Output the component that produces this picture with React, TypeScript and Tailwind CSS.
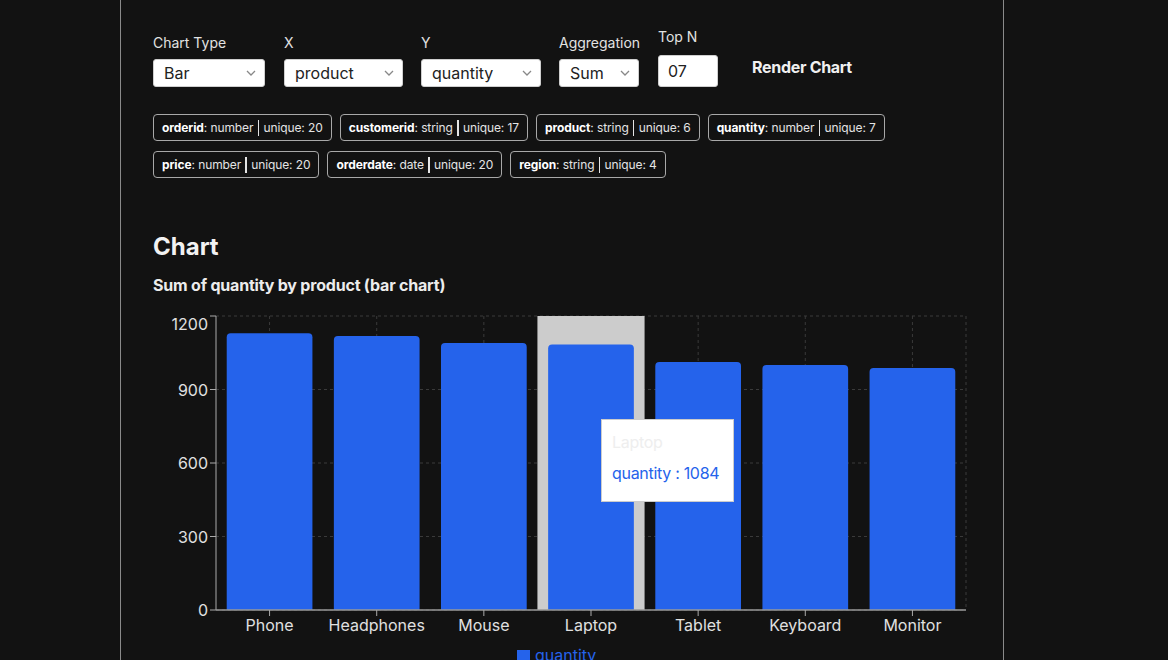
import React from "react";

const Chevron = () => (
  <svg className="pointer-events-none absolute right-[8px] top-1/2 -translate-y-1/2" width="10" height="6" viewBox="0 0 10 6">
    <path d="M1 1 L5 5 L9 1" fill="none" stroke="#888" strokeWidth="1.3" />
  </svg>
);

function Field({ label, value, width, className }: { label: string; value: string; width: string; className: string }) {
  return (
    <div className={`flex flex-col ${width} ${className}`}>
      <span className="mb-[6px] whitespace-nowrap text-sm leading-5 text-[#e2e2e2]">{label}</span>
      <div className={`relative h-[28px] ${width} rounded-[3px] border border-[#cfcfcf] bg-white`}>
        <span className="absolute left-[10px] top-1/2 -translate-y-1/2 text-base leading-5 text-[#222]">{value}</span>
        <Chevron />
      </div>
    </div>
  );
}

const pills = [
  ["orderid", "number", "20"],
  ["customerid", "string", "17"],
  ["product", "string", "6"],
  ["quantity", "number", "7"],
  ["price", "number", "20"],
  ["orderdate", "date", "20"],
  ["region", "string", "4"],
];

const data = [
  ["Phone", 1130],
  ["Headphones", 1118],
  ["Mouse", 1090],
  ["Laptop", 1084],
  ["Tablet", 1012],
  ["Keyboard", 1000],
  ["Monitor", 988],
] as const;

const FONT = "Inter, Roboto, 'Liberation Sans', sans-serif";

function Chart() {
  const ox = 63;
  const right = 813;
  const top = 16;
  const zero = 310;
  const band = (right - ox) / 7;
  const yScale = (v: number) => zero - (v / 1200) * (zero - top);
  const ticks = [0, 300, 600, 900, 1200];
  return (
    <div className="relative mt-[3px] h-[370px] w-[818px]">
      <svg width="818" height="370" className="block" style={{ fontFamily: FONT }}>
        {ticks.map((t) => (
          <line key={t} x1={ox} x2={right} y1={yScale(t)} y2={yScale(t)} stroke="#3a3a3a" strokeDasharray="3 3" />
        ))}
        {data.map((d, i) => (
          <line key={d[0]} x1={ox + band * (i + 0.5)} x2={ox + band * (i + 0.5)} y1={top} y2={zero} stroke="#3a3a3a" strokeDasharray="3 3" />
        ))}
        <line x1={right} x2={right} y1={top} y2={zero} stroke="#3a3a3a" strokeDasharray="3 3" />
        <rect x={ox + band * 3} y={top} width={band} height={zero - top} fill="#cccccc" />
        {data.map((d, i) => {
          const x = ox + band * i + band * 0.1;
          const w = band * 0.8;
          const y = yScale(d[1]);
          const r = 4;
          return (
            <path
              key={d[0]}
              d={`M${x},${zero} L${x},${y + r} Q${x},${y} ${x + r},${y} L${x + w - r},${y} Q${x + w},${y} ${x + w},${y + r} L${x + w},${zero} Z`}
              fill="#2563eb"
            />
          );
        })}
        <line x1={ox} x2={ox} y1={top} y2={zero} stroke="#aaaaaa" />
        <line x1={ox} x2={right} y1={zero} y2={zero} stroke="#999999" strokeWidth="1.5" />
        {ticks.map((t) => (
          <line key={t} x1={ox - 6} x2={ox} y1={yScale(t)} y2={yScale(t)} stroke="#aaaaaa" />
        ))}
        {ticks.map((t) => (
          <text
            key={t}
            x={ox - 8}
            y={t === 1200 ? yScale(t) + 8 : yScale(t)}
            textAnchor="end"
            dominantBaseline="central"
            fontSize="16"
            fill="#e0e0e0"
          >
            {t}
          </text>
        ))}
        {data.map((d, i) => (
          <g key={d[0]}>
            <line x1={ox + band * (i + 0.5)} x2={ox + band * (i + 0.5)} y1={zero} y2={zero + 6} stroke="#aaaaaa" />
            <text x={ox + band * (i + 0.5)} y={zero + 15} textAnchor="middle" dominantBaseline="central" fontSize="16" fill="#e0e0e0">
              {d[0]}
            </text>
          </g>
        ))}
        <rect x={364} y={350} width={13} height={13} fill="#2563eb" />
        <text x={382} y={355} dominantBaseline="central" fontSize="16" fill="#2563eb">
          quantity
        </text>
      </svg>
      <div className="absolute left-[448px] top-[119px] whitespace-nowrap border border-[#cccccc] bg-white pl-[10px] pr-[14px] pt-[10px] pb-[12px] text-base tracking-[-0.3px]">
        <div className="leading-6 text-[#eeeeee]">Laptop</div>
        <div className="pt-[7px] pb-[4px] leading-6 text-[#2563eb]">quantity : 1084</div>
      </div>
    </div>
  );
}

export default function App() {
  return (
    <div className="h-[660px] w-[1168px] overflow-hidden bg-[#121212]" style={{ fontFamily: FONT }}>
      <div className="ml-[120px] h-full w-[884px] border-x border-[#8a8a8a] px-8 pt-[27px]">
        <div className="flex items-end">
          <Field label="Chart Type" value="Bar" width="w-[112px]" className="" />
          <Field label="X" value="product" width="w-[119px]" className="ml-[19px]" />
          <Field label="Y" value="quantity" width="w-[120px]" className="ml-[18px]" />
          <Field label="Aggregation" value="Sum" width="w-[80px]" className="ml-[18px]" />
          <div className="ml-[19px] flex w-[60px] flex-col">
            <span className="mb-[8px] whitespace-nowrap text-sm leading-5 text-[#e2e2e2]">Top N</span>
            <div className="flex h-[32px] w-[60px] items-center rounded-[3px] border border-[#cfcfcf] bg-white pl-[9px] text-base text-[#222]">
              07
            </div>
          </div>
          <button className="ml-[18px] h-[41px] px-4 text-base font-bold leading-5 tracking-[-0.3px] text-[#f0f0f0]">Render Chart</button>
        </div>

        <div className="mt-[27px] flex flex-wrap gap-x-2 gap-y-[10px]">
          {pills.map(([n, t, u]) => (
            <div key={n} className="flex h-[27px] items-center rounded-[4px] border border-[#a8a8a8] px-2 text-xs tracking-[-0.1px] text-[#e4e4e4]">
              <span className="font-bold text-white">{n}</span>
              <span>: {t}&nbsp;</span>
              <span className="mx-[1px] h-[16px] w-[1.5px] bg-[#e4e4e4]" />
              <span>&nbsp;unique: {u}</span>
            </div>
          ))}
        </div>

        <h2 className="mt-[53px] text-2xl font-bold leading-8 text-[#f2f2f2]">Chart</h2>
        <div className="mt-[10px] text-base font-bold leading-6 tracking-[-0.2px] text-[#ececec]">Sum of quantity by product (bar chart)</div>
        <Chart />
      </div>
    </div>
  );
}
